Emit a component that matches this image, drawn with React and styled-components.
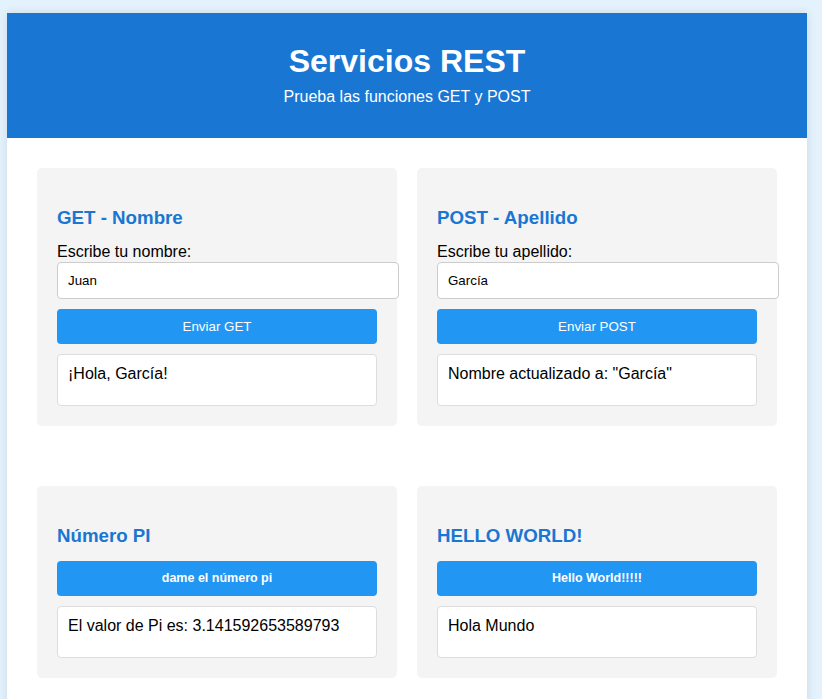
import React from 'react';
import styled, { createGlobalStyle } from 'styled-components';

const GlobalStyle = createGlobalStyle`
  body {
    margin: 0;
    padding: 13px 0 0 7px;
    background-color: #e3f2fd;
    font-family: Arial, "Liberation Sans", sans-serif;
    color: #000;
  }
`;

const Container = styled.div`
  width: 800px;
  background-color: #fff;
  box-shadow: 0 0 10px rgba(0, 0, 0, 0.1);
`;

const Header = styled.header`
  background-color: #1976d2;
  color: #fff;
  text-align: center;
  padding: 30px 20px 32px;

  h1 {
    margin: 0 0 8px;
    font-size: 32px;
    font-weight: bold;
  }

  p {
    margin: 0;
    font-size: 16px;
  }
`;

const Main = styled.main`
  padding: 30px;
  display: grid;
  grid-template-columns: repeat(2, 360px);
  column-gap: 20px;
  row-gap: 60px;
`;

const Card = styled.section`
  background-color: #f4f4f4;
  border-radius: 5px;
  padding: 20px;
`;

const Title = styled.h3`
  margin: 19px 0 14px;
  font-size: 18.72px;
  font-weight: bold;
  color: #1976d2;
`;

const Label = styled.label`
  display: block;
  margin: 2px 0 1px;
  font-size: 16px;
  line-height: 18px;
`;

const Input = styled.input`
  width: 100%;
  padding: 10px;
  margin: 0 0 10px;
  border: 1px solid #ccc;
  border-radius: 4px;
  font-family: inherit;
  font-size: 13.33px;
  color: #000;
`;

const Button = styled.button`
  display: block;
  width: 100%;
  padding: 10px;
  border: none;
  border-radius: 4px;
  background-color: #2196f3;
  color: #fff;
  font-family: inherit;
  font-size: ${(p) => (p.$strong ? '12.5px' : '13.33px')};
  font-weight: ${(p) => (p.$strong ? 'bold' : 'normal')};
  line-height: ${(p) => (p.$strong ? '15px' : 'normal')};
  cursor: pointer;
`;

const Result = styled.div`
  margin-top: 10px;
  padding: 10px;
  min-height: 30px;
  background-color: #fff;
  border: 1px solid #ddd;
  border-radius: 4px;
  font-size: 16px;
`;

export default function App() {
  return (
    <>
      <GlobalStyle />
      <Container>
        <Header>
          <h1>Servicios REST</h1>
          <p>Prueba las funciones GET y POST</p>
        </Header>

        <Main>
          <Card>
            <Title>GET - Nombre</Title>
            <Label htmlFor="nombre">Escribe tu nombre:</Label>
            <Input id="nombre" defaultValue="Juan" />
            <Button>Enviar GET</Button>
            <Result>¡Hola, García!</Result>
          </Card>

          <Card>
            <Title>POST - Apellido</Title>
            <Label htmlFor="apellido">Escribe tu apellido:</Label>
            <Input id="apellido" defaultValue="García" />
            <Button>Enviar POST</Button>
            <Result>Nombre actualizado a: "García"</Result>
          </Card>

          <Card>
            <Title>Número PI</Title>
            <Button $strong>dame el número pi</Button>
            <Result>El valor de Pi es: 3.141592653589793</Result>
          </Card>

          <Card>
            <Title>HELLO WORLD!</Title>
            <Button $strong>Hello World!!!!!</Button>
            <Result>Hola Mundo</Result>
          </Card>
        </Main>
      </Container>
    </>
  );
}
